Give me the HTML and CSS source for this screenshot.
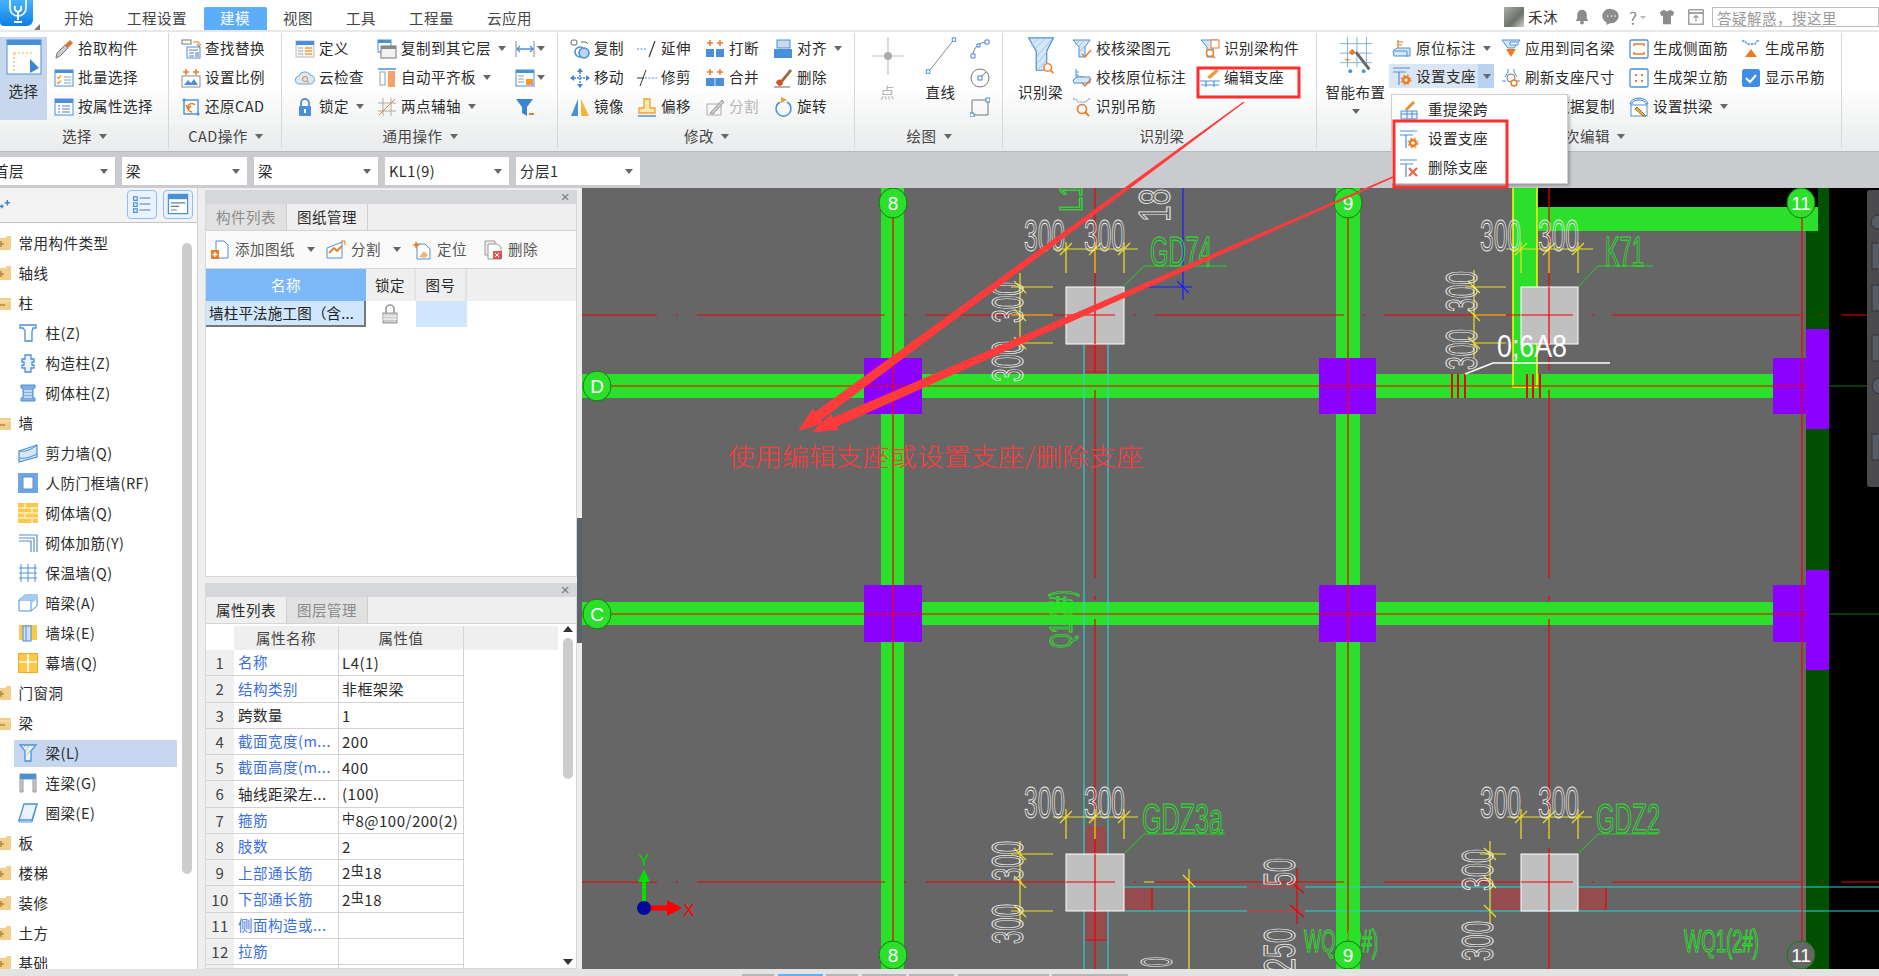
FILE: index.html
```html
<!DOCTYPE html>
<html lang="zh-CN">
<head>
<meta charset="utf-8">
<title>建模</title>
<link rel="stylesheet" href="styles.css">
</head>
<body>
<svg class="sprite" aria-hidden="true">
<symbol id="pick" viewBox="0 0 20 20"><path d="M2 19l1-5 8-8 3 3-8 8z" fill="#ccc" stroke="#777"/><path d="M11 6l5-5 3 3-5 5z" fill="#d9772c"/></symbol>
<symbol id="batch" viewBox="0 0 20 20"><rect x="1" y="2" width="18" height="16" fill="#fff" stroke="#4a90d9"/><rect x="1" y="2" width="18" height="3" fill="#4a90d9"/><path d="M3 9l1.500 1.500L7 7.500M3 14l1.500 1.500L7 12.500" fill="none" stroke="#f09a30" stroke-width="1.300"/><path d="M10 9h7M10 12h7M10 15h7" stroke="#7aa"/></symbol>
<symbol id="attr" viewBox="0 0 20 20"><rect x="1" y="2" width="18" height="16" fill="#fff" stroke="#4a90d9"/><rect x="1" y="2" width="18" height="4" fill="#4a90d9"/><path d="M4 9h2M4 12h2M4 15h2M8 9h8M8 12h8M8 15h8" stroke="#5b7f9f"/></symbol>
<symbol id="find" viewBox="0 0 20 20"><rect x="1" y="1" width="9" height="4" fill="#fff" stroke="#777"/><path d="M12 3h6v4M16 5l2 3 2-3" fill="none" stroke="#e87d2c"/><rect x="6" y="8" width="13" height="11" fill="#fff" stroke="#4a90d9"/><path d="M8 11h9M8 14h5M8 17h5M15 13v5M17 13v5" stroke="#4a78a8"/></symbol>
<symbol id="scale" viewBox="0 0 20 20"><path d="M5 1v6M2 4h6M15 1v6M12 4h6" stroke="#e87d2c" stroke-width="1.500"/><rect x="1" y="8" width="18" height="11" fill="#fff" stroke="#889"/><path d="M3 17l4-5 3 3 3-4 4 6z" fill="#4a90d9"/></symbol>
<symbol id="restore" viewBox="0 0 20 20"><rect x="3" y="3" width="14" height="14" fill="none" stroke="#4a90d9" stroke-width="1.400"/><path d="M1 3h4M3 1v4M15 17h4M17 15v4" stroke="#4a90d9"/><path d="M14 8c-3-3-7-1-7 3 0 2 2 4 4 4M5 8l2 4 3-3" fill="none" stroke="#e87d2c" stroke-width="1.600"/></symbol>
<symbol id="define" viewBox="0 0 20 20"><rect x="1" y="2" width="18" height="16" fill="#f4f4f0" stroke="#bbb"/><rect x="1" y="2" width="18" height="4" fill="#4a90d9"/><path d="M3 9h5M3 12h5M3 15h5" stroke="#aaa"/><path d="M10 9h7M10 12h7M10 15h7" stroke="#f0a040" stroke-width="1.400"/></symbol>
<symbol id="cloud" viewBox="0 0 20 20"><path d="M5 16a4 4 0 0 1-1-8 6 6 0 0 1 11-1 4.500 4.500 0 0 1 0 9z" fill="#dbe9f7" stroke="#6aa3dc"/><circle cx="10" cy="11" r="2.500" fill="none" stroke="#e87d2c"/><path d="M12 13l2 2" stroke="#e87d2c"/></symbol>
<symbol id="lock" viewBox="0 0 20 20"><path d="M6 9V6a4 4 0 0 1 8 0v3" fill="none" stroke="#4a90d9" stroke-width="1.800"/><rect x="4" y="9" width="12" height="10" rx="1" fill="#4a90d9"/><rect x="9" y="12" width="2" height="4" fill="#fff"/></symbol>
<symbol id="copylayer" viewBox="0 0 20 20"><rect x="1" y="1" width="13" height="12" fill="#fff" stroke="#4a90d9"/><rect x="1" y="1" width="13" height="3" fill="#4a90d9"/><rect x="4" y="7" width="15" height="12" fill="#f2f2f2" stroke="#777"/><rect x="4" y="7" width="15" height="3" fill="#888"/></symbol>
<symbol id="alignplate" viewBox="0 0 20 20"><path d="M1 1h18" stroke="#4a90d9" stroke-width="1.500"/><rect x="3" y="4" width="5" height="13" fill="#fff" stroke="#999"/><rect x="11" y="3" width="7" height="16" fill="#f7a26a"/></symbol>
<symbol id="twopoint" viewBox="0 0 20 20"><path d="M6 1v18M14 1v18M1 6h18M1 14h18" stroke="#aaa"/><path d="M2 18L18 2" stroke="#e87d2c"/></symbol>
<symbol id="dimh" viewBox="0 0 20 20"><path d="M1 2v16M19 2v16" stroke="#888"/><path d="M3 10h14M5 7l-3 3 3 3M15 7l3 3-3 3" fill="none" stroke="#4a90d9" stroke-width="1.300"/></symbol>
<symbol id="win2" viewBox="0 0 20 20"><rect x="1" y="2" width="18" height="16" fill="#fff" stroke="#4a90d9"/><rect x="1" y="2" width="18" height="3" fill="#4a90d9"/><path d="M3 8h6M3 11h6M3 14h6" stroke="#999"/><rect x="11" y="11" width="7" height="6" fill="#f09a30"/></symbol>
<symbol id="filter" viewBox="0 0 20 20"><path d="M1 2h17l-6 8v9l-5-3v-6z" fill="#3d84d2"/><path d="M14 17h5" stroke="#e87d2c" stroke-width="2"/></symbol>
<symbol id="copy" viewBox="0 0 20 20"><rect x="1" y="1" width="6" height="5" rx="2" fill="none" stroke="#666"/><path d="M11 3h5l2 2" fill="none" stroke="#666"/><circle cx="10" cy="13" r="5" fill="none" stroke="#4a90d9" stroke-width="1.600"/><circle cx="14" cy="14" r="5" fill="#bad6f2" stroke="#4a90d9" stroke-width="1.600"/></symbol>
<symbol id="move" viewBox="0 0 20 20"><path d="M10 0l3 4H7zM10 20l-3-4h6zM0 10l4-3v6zM20 10l-4 3V7z" fill="#3d84d2"/><path d="M10 4v12M4 10h12" stroke="#3d84d2" stroke-width="1.500" stroke-dasharray="2 1"/></symbol>
<symbol id="mirror" viewBox="0 0 20 20"><path d="M8 2v17H1z" fill="#4a90d9"/><path d="M11 2v17h8z" fill="#f7b538"/></symbol>
<symbol id="extend" viewBox="0 0 20 20"><path d="M0 10h10" stroke="#4a90d9" stroke-dasharray="2 1.500"/><path d="M12 18L18 2" stroke="#333" stroke-width="1.200"/></symbol>
<symbol id="trim" viewBox="0 0 20 20"><path d="M0 10h7" stroke="#333"/><path d="M8 10h12" stroke="#4a90d9" stroke-dasharray="2 1.500"/><path d="M3 18L9 2" stroke="#333"/></symbol>
<symbol id="offset" viewBox="0 0 20 20"><path d="M2 16v-5h5V2h6v9h5v5z" fill="#ffe7b0" stroke="#f0a030" stroke-width="1.300"/><path d="M1 19h18" stroke="#4a90d9" stroke-width="1.500"/></symbol>
<symbol id="break" viewBox="0 0 20 20"><path d="M5 1v6M2 4h6M15 1v6M12 4h6" stroke="#e87d2c" stroke-width="1.500"/><rect x="1" y="10" width="8" height="8" fill="#4a90d9"/><rect x="11" y="10" width="8" height="8" fill="#4a90d9"/></symbol>
<symbol id="merge" viewBox="0 0 20 20"><path d="M5 1v6M2 4h6M15 1v6M12 4h6" stroke="#e87d2c" stroke-width="1.500"/><rect x="1" y="10" width="18" height="8" fill="#4a90d9"/><path d="M10 10v8" stroke="#cfe3f7"/></symbol>
<symbol id="split" viewBox="0 0 20 20"><path d="M2 7h14v11H2z" fill="none" stroke="#aaa"/><path d="M5 16L17 3l2 2L8 17z" fill="#ccc" stroke="#999"/></symbol>
<symbol id="splitc" viewBox="0 0 20 20"><path d="M1 8l15-6v16H1z" fill="#fff" stroke="#4a90d9"/><path d="M3 13l5-5 3 3 5-5" fill="none" stroke="#ec7b22" stroke-width="1.800"/><path d="M15 1h4v4" fill="none" stroke="#ec7b22"/></symbol>
<symbol id="align" viewBox="0 0 20 20"><rect x="4" y="1" width="13" height="8" fill="#c6dbf2" stroke="#4a90d9"/><rect x="1" y="10" width="18" height="9" fill="#4a90d9"/></symbol>
<symbol id="brush" viewBox="0 0 20 20"><path d="M8 12L17 1l2 2-9 11z" fill="#9c6a3a"/><path d="M3 15a4 4 0 0 1 6-3l1 2a4 4 0 0 1-4 4z" fill="#d0561f"/><path d="M1 19h16" stroke="#666"/></symbol>
<symbol id="rotate" viewBox="0 0 20 20"><path d="M7 5a7.500 7.500 0 1 0 7 0" fill="none" stroke="#4a90d9" stroke-width="1.500"/><path d="M8 0l6 3-6 3z" fill="#f09a30"/></symbol>
<symbol id="point" viewBox="0 0 36 44"><path d="M18 0v44M0 22h36" stroke="#bbb" stroke-width="1.200"/><circle cx="18" cy="22" r="4.500" fill="#aaa"/></symbol>
<symbol id="line" viewBox="0 0 36 44"><path d="M3 41L33 3" stroke="#777" stroke-width="1"/><rect x="1" y="38" width="4" height="4" fill="#fff" stroke="#3d84d2"/><rect x="31" y="1" width="4" height="4" fill="#fff" stroke="#3d84d2"/></symbol>
<symbol id="arc" viewBox="0 0 20 20"><path d="M3 17C3 9 9 3 17 3" fill="none" stroke="#777"/><path d="M1 15h4v4H1zM7 5h3v3H7zM15 1h4v4h-4z" fill="#fff" stroke="#3d84d2"/></symbol>
<symbol id="circle" viewBox="0 0 20 20"><circle cx="10" cy="10" r="9" fill="none" stroke="#777"/><path d="M10 10l6-6" stroke="#777"/><rect x="8" y="8" width="4" height="4" fill="#fff" stroke="#3d84d2"/></symbol>
<symbol id="rect" viewBox="0 0 20 20"><path d="M2 3h16v15H2z" fill="none" stroke="#777"/><path d="M0 16h4v4H0zM16 1h4v4h-4z" fill="#fff" stroke="#3d84d2"/></symbol>
<symbol id="beam" viewBox="0 0 28 40"><path d="M1 1h26l-7 14v20H9V15z" fill="#d6e6f7" stroke="#4a90d9" stroke-width="1.300"/><path d="M3 10l8-8M7 13l11-11M10 20L25 3M10 28L20 16M11 34l9-10" stroke="#9cc2ea"/><circle cx="21" cy="32" r="4" fill="#fff" stroke="#ec7b22" stroke-width="1.500"/><path d="M24 35l3 3" stroke="#ec7b22" stroke-width="1.800"/></symbol>
<symbol id="check1" viewBox="0 0 20 20"><path d="M1 1h17l-5 7v10H7V8z" fill="#d6e6f7" stroke="#4a90d9"/><path d="M3 6l4-4M7 7l5-5M8 12l5-5" stroke="#9cc2ea"/><path d="M10 15l3 3 6-7" fill="none" stroke="#e8792c" stroke-width="1.500"/></symbol>
<symbol id="check2" viewBox="0 0 20 20"><path d="M4 1v8h8M4 4h3M4 7h3" fill="none" stroke="#4a90d9"/><path d="M1 12l4-3h13v6H2z" fill="#d6e6f7" stroke="#4a90d9"/><path d="M10 15l3 3 6-7" fill="none" stroke="#e8792c" stroke-width="1.500"/></symbol>
<symbol id="hang" viewBox="0 0 20 20"><path d="M1 2h3l2 3h8l2-3h3" fill="none" stroke="#4a90d9" stroke-dasharray="2 1"/><circle cx="10" cy="12" r="4.500" fill="none" stroke="#ec7b22" stroke-width="1.600"/><path d="M13 15l4 4" stroke="#ec7b22" stroke-width="2"/></symbol>
<symbol id="beamcomp" viewBox="0 0 20 20"><path d="M1 1h17l-5 7v10H7V8z" fill="#d6e6f7" stroke="#4a90d9"/><rect x="11" y="1" width="8" height="8" fill="#fff" stroke="#ec7b22"/><circle cx="10" cy="14" r="3.500" fill="#fff" stroke="#ec7b22" stroke-width="1.500"/><path d="M13 17l2 2" stroke="#ec7b22" stroke-width="1.500"/></symbol>
<symbol id="editsup" viewBox="0 0 20 20"><path d="M7 9l9-8 3 2-9 8z" fill="#ef9a45"/><path d="M0 13h20M1 17h18M6 13v6M14 13v6" stroke="#4a90d9" stroke-width="1.200"/></symbol>
<symbol id="smart" viewBox="0 0 36 40"><path d="M9 0v32M19 0v32M29 0v32M1 7h34M1 17h34M1 27h34" stroke="#79aee5"/><path d="M18 16l14 18" stroke="#666" stroke-width="3"/><path d="M14 13l3 3-3 3-3-3zM9 21v5M6 24h6" fill="#ec7b22" stroke="#ec7b22"/><circle cx="26" cy="36" r="2" fill="#4a90d9"/><circle cx="12" cy="36" r="2" fill="#4a90d9"/></symbol>
<symbol id="origin" viewBox="0 0 20 20"><path d="M6 1v9M6 3h5M6 6h4" stroke="#ec7b22" stroke-width="1.200"/><path d="M1 12l4-3h13v8H2z" fill="#d6e6f7" stroke="#4a90d9"/><path d="M2 12h13v6" fill="none" stroke="#4a90d9"/></symbol>
<symbol id="setsup" viewBox="0 0 20 20"><path d="M1 2h17M1 6h13M7 6v13" stroke="#4a90d9" stroke-width="1.200"/><circle cx="14" cy="14" r="3" fill="none" stroke="#ec7b22" stroke-width="2.400"/><circle cx="14" cy="14" r="5" fill="none" stroke="#ec7b22" stroke-width="1" stroke-dasharray="2 2"/></symbol>
<symbol id="delsup" viewBox="0 0 20 20"><path d="M1 2h17M1 6h13M7 6v13" stroke="#4a90d9" stroke-width="1.200"/><path d="M10 10l8 8M18 10l-8 8" stroke="#e8674a" stroke-width="2.200"/></symbol>
<symbol id="apply" viewBox="0 0 20 20"><path d="M1 1h18l-6 8H7z" fill="#d6e6f7" stroke="#4a90d9"/><path d="M9 3h8v3H9z" fill="#fff" stroke="#4a90d9"/><path d="M5 10h10l-5 8z" fill="#ec7b22"/></symbol>
<symbol id="refresh" viewBox="0 0 20 20"><path d="M1 13h4M15 13h4M7 1v3M13 1v3M7 4l-3 5M13 4l3 5" stroke="#4a90d9" fill="none"/><circle cx="10" cy="10" r="4" fill="none" stroke="#777"/><circle cx="13" cy="15" r="3" fill="#fff" stroke="#ec7b22" stroke-width="1.400"/></symbol>
<symbol id="side" viewBox="0 0 20 20"><rect x="1" y="1" width="18" height="18" rx="1.500" fill="#fff" stroke="#4a90d9" stroke-width="1.300"/><path d="M5 7V5h10v2M5 13v2h10v-2" fill="none" stroke="#ec7b22" stroke-width="1.500"/></symbol>
<symbol id="erect" viewBox="0 0 20 20"><rect x="1" y="1" width="18" height="18" rx="1.500" fill="#fff" stroke="#4a90d9" stroke-width="1.300"/><path d="M6 6h2v2H6zM12 6h2v2h-2zM6 12h2v2H6zM12 12h2v2h-2z" fill="#ec7b22"/></symbol>
<symbol id="arch" viewBox="0 0 20 20"><path d="M1 7a9 6 0 0 1 18 0l-2 0a7 4 0 0 0-14 0z" fill="#cfe2f6" stroke="#4a90d9"/><rect x="2" y="8" width="16" height="11" fill="#fff" stroke="#4a90d9"/><path d="M8 10l9 9-3 0-8-7z" fill="#e9b04a" stroke="#98712c"/></symbol>
<symbol id="hanger" viewBox="0 0 20 20"><path d="M1 2h3l2 3h8l2-3h3" fill="none" stroke="#4a90d9" stroke-width="1.300" stroke-dasharray="2.500 1"/><path d="M4 18l6-8 6 8z" fill="#ec7b22"/></symbol>
<symbol id="chk" viewBox="0 0 20 20"><rect x="1" y="1" width="18" height="18" rx="2.500" fill="#3d8fe6"/><path d="M5 10l4 4 6-7" fill="none" stroke="#fff" stroke-width="2"/></symbol>
<symbol id="reload" viewBox="0 0 20 20"><path d="M6 9L14 1l2 2-8 8z" fill="#ef8a2e"/><path d="M2 11h16v8H2zM2 14h16M8 11v8M13 11v8" fill="#eaf2fb" stroke="#4a90d9"/></symbol>
<symbol id="tcol" viewBox="0 0 20 20"><path d="M2 2h16v3h-3l-1 3v10H7V8L5 5H2z" fill="#fff" stroke="#4a90d9" stroke-width="1.300"/></symbol>
<symbol id="gcol" viewBox="0 0 20 20"><path d="M7 2h6v4h3v3h-2v3h2v3h-3v4H7v-4H4v-3h2V9H4V6h3z" fill="#eaf2fb" stroke="#4a90d9" stroke-width="1.300"/></symbol>
<symbol id="mcol" viewBox="0 0 20 20"><path d="M3 2h14v3h-2v10h2v3H3v-3h2V5H3z" fill="#7fb0e5" stroke="#4a90d9"/><path d="M6 8h8M6 11h8M6 14h8" stroke="#fff"/></symbol>
<symbol id="shear" viewBox="0 0 20 20"><path d="M1 8l18-6v12L1 19z" fill="#d6e6f7" stroke="#4a90d9" stroke-width="1.200"/><path d="M1 8c6 1 12-1 18-6M1 15c6 1 12-1 18-4" fill="none" stroke="#4a90d9"/></symbol>
<symbol id="door" viewBox="0 0 20 20"><rect x="0" y="0" width="20" height="20" fill="#6ea5e4"/><rect x="5" y="4" width="10" height="12" fill="#fff" stroke="#5a8fd8"/></symbol>
<symbol id="brick" viewBox="0 0 20 20"><rect width="20" height="20" fill="#fdc94b"/><path d="M0 5h20M0 10h20M0 15h20M7 0v5M14 5v5M7 10v5M14 15v5" stroke="#fff"/></symbol>
<symbol id="rein" viewBox="0 0 20 20"><path d="M1 2h18v17M1 5h15v14M1 8h12v11" fill="none" stroke="#5b8ec4" stroke-width="1.200"/></symbol>
<symbol id="insul" viewBox="0 0 20 20"><path d="M3 1v18M10 1v18M17 1v18M1 5h18M1 10h18M1 15h18" stroke="#4a90d9"/></symbol>
<symbol id="dbeam" viewBox="0 0 20 20"><path d="M1 7l6-5h12v11l-6 5H1z" fill="#fff" stroke="#4a90d9"/><path d="M1 7h12v11M13 7l6-5" fill="none" stroke="#4a90d9"/><path d="M7 2h12v4L13 11V7H1z" fill="#a8ccee"/></symbol>
<symbol id="pier" viewBox="0 0 20 20"><rect x="1" y="2" width="18" height="15" fill="#fdc94b"/><rect x="5" y="3" width="8" height="15" fill="#cfe2f6" stroke="#4a90d9"/><path d="M8 3v15" stroke="#4a90d9"/></symbol>
<symbol id="curtain" viewBox="0 0 20 20"><rect width="20" height="20" fill="#fdc94b"/><path d="M10 0v20M0 9h20" stroke="#fff" stroke-width="1.500"/><rect x=".5" y=".5" width="19" height="19" fill="none" stroke="#f5a623"/></symbol>
<symbol id="lbeam" viewBox="0 0 20 20"><path d="M2 1h16v18h-3V6H5v13H2z" fill="#c8c8c8" stroke="#999"/><rect x="2" y="1" width="16" height="5" fill="#4a8fdc"/></symbol>
<symbol id="rbeam" viewBox="0 0 20 20"><path d="M6 1h13l-5 16H1z" fill="#eaf2fb" stroke="#4a90d9" stroke-width="1.300"/><path d="M1 17v2h13l5-18" fill="none" stroke="#4a90d9"/></symbol>
<symbol id="beaml" viewBox="0 0 20 20"><path d="M2 2h16l-5 6v10H7V8z" fill="#eaf2fb" stroke="#4a90d9" stroke-width="1.300"/><path d="M4 6l3-3M7 8l4-5M9 12l3-4" stroke="#9cc2ea"/></symbol>
<symbol id="fplus" viewBox="0 0 16 16"><path d="M0 3h8l2-2h4v14H0z" fill="#f3cf8e"/><path d="M1 9h6M4 6v6" stroke="#b98a3a" stroke-width="1.500"/></symbol>
<symbol id="fminus" viewBox="0 0 16 16"><path d="M0 3h14v12H0z" fill="#f3cf8e"/><path d="M0 6h14" stroke="#fbe7bf"/><path d="M1 10h7" stroke="#b98a3a" stroke-width="1.500"/></symbol>
<symbol id="addp" viewBox="0 0 20 20"><path d="M6 1h8l4 4v13H6z" fill="#fff" stroke="#4a90d9"/><rect x="1" y="10" width="8" height="9" fill="#ec7b22"/><path d="M5 12v5M2.500 14.500h5" stroke="#fff" stroke-width="1.300"/></symbol>
<symbol id="locate" viewBox="0 0 20 20"><path d="M5 4h8l5 5v10H5z" fill="#fff" stroke="#4a90d9"/><path d="M4 1l1.500 3L9 5 5.500 6 4 9 3 6 0 5l3-1z" fill="#ec7b22"/><path d="M7 17l5-6 4 4-3 3z" fill="#f7b47a"/></symbol>
<symbol id="delp" viewBox="0 0 20 20"><path d="M2 1h10v14H2z" fill="#eee" stroke="#999"/><path d="M5 4h9l4 3v12H5z" fill="#fff" stroke="#999"/><rect x="10" y="11" width="9" height="8" fill="#e0555a"/><path d="M12 13l4 4M16 13l-4 4" stroke="#fff"/></symbol>
<symbol id="grey-lock" viewBox="0 0 20 20"><path d="M6 9V5a4 4 0 0 1 8 0v4" fill="none" stroke="#999" stroke-width="1.600"/><rect x="3" y="9" width="14" height="10" fill="#ccc" stroke="#999"/><path d="M3 12h14M3 15h14" stroke="#fff"/></symbol>
<symbol id="bell" viewBox="0 0 20 20"><path d="M10 1a6 6 0 0 0-6 6v5l-2 3h16l-2-3V7a6 6 0 0 0-6-6z" fill="#8c8c8c"/><circle cx="10" cy="17" r="2.500" fill="#8c8c8c"/></symbol>
<symbol id="chat" viewBox="0 0 20 20"><path d="M10 1a9 8 0 0 0-5 15l0 3 4-2a9 8 0 1 0 1-16z" fill="#8c8c8c"/><path d="M6 9h1M10 9h1M14 9h1" stroke="#fff" stroke-width="2"/></symbol>
<symbol id="shirt" viewBox="0 0 20 20"><path d="M6 1l4 2 4-2 5 3-2 5-2-1v11H5V8L3 9 1 4z" fill="#8c8c8c"/></symbol>
<symbol id="box" viewBox="0 0 20 20"><rect x="1" y="1" width="18" height="18" fill="#fff" stroke="#8c8c8c" stroke-width="1.500"/><path d="M1 5h18" stroke="#8c8c8c" stroke-width="2"/><path d="M10 16V9M7 11l3-3 3 3" fill="none" stroke="#8c8c8c" stroke-width="1.300"/></symbol>
</svg>

<header class="topbar">
  <div class="logo"><svg class="logo-mark" viewBox="0 0 33 26"><path d="M10 0v8c0 5 4 8 8 8s8-3 8-8V0" fill="none" stroke="#d9f0ff" stroke-width="2"/><path d="M15 6c-1 3 0 5 3 6 3-1 4-3 3-6M18 12v8M14 22h8" fill="none" stroke="#fff" stroke-width="2"/></svg><i class="logo-corner"></i></div>
  <nav class="tabs">
    <span class="tab">开始</span><span class="tab">工程设置</span><span class="tab active">建模</span><span class="tab">视图</span><span class="tab">工具</span><span class="tab">工程量</span><span class="tab">云应用</span>
  </nav>
  <div class="account">
    <i class="avatar"></i><span class="uname">禾沐</span>
    <svg class="hi"><use href="#bell"/></svg>
    <svg class="hi chat"><use href="#chat"/></svg>
    <span class="help">?</span><i class="arr small"></i>
    <svg class="hi shirt"><use href="#shirt"/></svg>
    <svg class="hi"><use href="#box"/></svg>
    <span class="search">答疑解惑，搜这里</span>
  </div>
</header>

<section class="ribbon">
  <div class="group g1">
    <div class="gbody">
      <div class="big select"><svg class="sel-ic" viewBox="0 0 36 36"><rect x="1" y="1" width="34" height="34" fill="#fff" stroke="#4a90d9"/><rect x="1" y="1" width="34" height="5" fill="#4a90d9"/><path d="M8 14h18M8 14v18" stroke="#f5a623" stroke-dasharray="2 2"/><path d="M24 20l9 9-9 5z" fill="#3d84d2"/></svg><span>选择</span></div>
      <div class="col c-g1">
        <div class="it"><svg class="ic"><use href="#pick"/></svg>拾取构件</div>
        <div class="it"><svg class="ic"><use href="#batch"/></svg>批量选择</div>
        <div class="it"><svg class="ic"><use href="#attr"/></svg>按属性选择</div>
      </div>
    </div>
    <div class="glabel">选择<i class="arr"></i></div>
  </div>
  <div class="group g2">
    <div class="gbody">
      <div class="col">
        <div class="it"><svg class="ic"><use href="#find"/></svg>查找替换</div>
        <div class="it"><svg class="ic"><use href="#scale"/></svg>设置比例</div>
        <div class="it"><svg class="ic"><use href="#restore"/></svg>还原CAD</div>
      </div>
    </div>
    <div class="glabel">CAD操作<i class="arr"></i></div>
  </div>
  <div class="group g3">
    <div class="gbody">
      <div class="col w82">
        <div class="it"><svg class="ic"><use href="#define"/></svg>定义</div>
        <div class="it"><svg class="ic"><use href="#cloud"/></svg>云检查</div>
        <div class="it"><svg class="ic"><use href="#lock"/></svg>锁定<i class="arr"></i></div>
      </div>
      <div class="col w138">
        <div class="it"><svg class="ic"><use href="#copylayer"/></svg>复制到其它层<i class="arr"></i></div>
        <div class="it"><svg class="ic"><use href="#alignplate"/></svg>自动平齐板<i class="arr"></i></div>
        <div class="it"><svg class="ic"><use href="#twopoint"/></svg>两点辅轴<i class="arr"></i></div>
      </div>
      <div class="col">
        <div class="it"><svg class="ic"><use href="#dimh"/></svg><i class="arr tight"></i></div>
        <div class="it"><svg class="ic"><use href="#win2"/></svg><i class="arr tight"></i></div>
        <div class="it"><svg class="ic"><use href="#filter"/></svg></div>
      </div>
    </div>
    <div class="glabel">通用操作<i class="arr"></i></div>
  </div>
  <div class="group g4">
    <div class="gbody">
      <div class="col w67">
        <div class="it"><svg class="ic"><use href="#copy"/></svg>复制</div>
        <div class="it"><svg class="ic"><use href="#move"/></svg>移动</div>
        <div class="it"><svg class="ic"><use href="#mirror"/></svg>镜像</div>
      </div>
      <div class="col w68">
        <div class="it"><svg class="ic"><use href="#extend"/></svg>延伸</div>
        <div class="it"><svg class="ic"><use href="#trim"/></svg>修剪</div>
        <div class="it"><svg class="ic"><use href="#offset"/></svg>偏移</div>
      </div>
      <div class="col w68">
        <div class="it"><svg class="ic"><use href="#break"/></svg>打断</div>
        <div class="it"><svg class="ic"><use href="#merge"/></svg>合并</div>
        <div class="it off"><svg class="ic"><use href="#split"/></svg>分割</div>
      </div>
      <div class="col">
        <div class="it"><svg class="ic"><use href="#align"/></svg>对齐<i class="arr"></i></div>
        <div class="it"><svg class="ic"><use href="#brush"/></svg>删除</div>
        <div class="it"><svg class="ic"><use href="#rotate"/></svg>旋转</div>
      </div>
    </div>
    <div class="glabel">修改<i class="arr"></i></div>
  </div>
  <div class="group g5">
    <div class="gbody">
      <div class="big w49 off"><svg class="big-ic"><use href="#point"/></svg><span>点</span></div>
      <div class="big w49 gap-l"><svg class="big-ic"><use href="#line"/></svg><span>直线</span></div>
      <div class="col draw">
        <div class="it"><svg class="ic"><use href="#arc"/></svg></div>
        <div class="it"><svg class="ic"><use href="#circle"/></svg></div>
        <div class="it"><svg class="ic"><use href="#rect"/></svg></div>
      </div>
    </div>
    <div class="glabel">绘图<i class="arr"></i></div>
  </div>
  <div class="group g6">
    <div class="gbody">
      <div class="big w59"><svg class="big-ic"><use href="#beam"/></svg><span>识别梁</span></div>
      <div class="col w128">
        <div class="it"><svg class="ic"><use href="#check1"/></svg>校核梁图元</div>
        <div class="it"><svg class="ic"><use href="#check2"/></svg>校核原位标注</div>
        <div class="it"><svg class="ic"><use href="#hang"/></svg>识别吊筋</div>
      </div>
      <div class="col">
        <div class="it"><svg class="ic"><use href="#beamcomp"/></svg>识别梁构件</div>
        <div class="it"><svg class="ic"><use href="#editsup"/></svg>编辑支座</div>
      </div>
    </div>
    <div class="glabel g6-label">识别梁</div>
  </div>
  <div class="group g7">
    <div class="gbody">
      <div class="big w73"><svg class="big-ic"><use href="#smart"/></svg><span>智能布置</span><i class="arr big-arr"></i></div>
      <div class="col w109">
        <div class="it"><svg class="ic"><use href="#origin"/></svg>原位标注<i class="arr"></i></div>
        <div class="it on"><svg class="ic"><use href="#setsup"/></svg>设置支座<i class="arr"></i></div>
      </div>
      <div class="col w128">
        <div class="it"><svg class="ic"><use href="#apply"/></svg>应用到同名梁</div>
        <div class="it"><svg class="ic"><use href="#refresh"/></svg>刷新支座尺寸</div>
        <div class="it"><svg class="ic"></svg>梁跨数据复制</div>
      </div>
      <div class="col w112">
        <div class="it"><svg class="ic"><use href="#side"/></svg>生成侧面筋</div>
        <div class="it"><svg class="ic"><use href="#erect"/></svg>生成架立筋</div>
        <div class="it"><svg class="ic"><use href="#arch"/></svg>设置拱梁<i class="arr"></i></div>
      </div>
      <div class="col">
        <div class="it"><svg class="ic"><use href="#hanger"/></svg>生成吊筋</div>
        <div class="it"><svg class="ic"><use href="#chk"/></svg>显示吊筋</div>
      </div>
    </div>
    <div class="glabel g7-label">二次编辑<i class="arr"></i></div>
  </div>
  <div class="ribbon-end"></div>
</section>

<section class="combos">
  <div class="combo first"><span>首层</span><i class="arr"></i></div>
  <div class="combo w125"><span>梁</span><i class="arr"></i></div>
  <div class="combo w124"><span>梁</span><i class="arr"></i></div>
  <div class="combo w124"><span>KL1(9)</span><i class="arr"></i></div>
  <div class="combo w124"><span>分层1</span><i class="arr"></i></div>
</section>

<main class="workspace">
  <aside class="tree-panel">
    <div class="tree-head">
      <svg class="sparkle" viewBox="0 0 12 12"><path d="M8 1v6M5 4h6M2 6v4M0 8h4" stroke="#3d84d2" stroke-width="1.600"/></svg>
      <span class="tbtn"><svg viewBox="0 0 20 20"><path d="M3 4h3v3H3zM3 9h3v3H3zM3 14h3v3H3z" fill="none" stroke="#4a90d9"/><path d="M8 5h9M8 10h9M8 15h9" stroke="#5d7f9f"/></svg></span>
      <span class="tbtn"><svg viewBox="0 0 20 20"><rect x="2" y="2" width="16" height="16" fill="#fff" stroke="#4a90d9"/><rect x="2" y="2" width="16" height="4" fill="#4a90d9"/><path d="M4 9h12M4 12h7M4 15h5" stroke="#5d7f9f"/></svg></span>
    </div>
    <div class="tree">
      <div class="n g"><svg class="fi"><use href="#fplus"/></svg>常用构件类型</div>
      <div class="n g"><svg class="fi"><use href="#fplus"/></svg>轴线</div>
      <div class="n g"><svg class="fi"><use href="#fminus"/></svg>柱</div>
      <div class="n l"><svg class="li"><use href="#tcol"/></svg>柱(Z)</div>
      <div class="n l"><svg class="li"><use href="#gcol"/></svg>构造柱(Z)</div>
      <div class="n l"><svg class="li"><use href="#mcol"/></svg>砌体柱(Z)</div>
      <div class="n g"><svg class="fi"><use href="#fminus"/></svg>墙</div>
      <div class="n l"><svg class="li"><use href="#shear"/></svg>剪力墙(Q)</div>
      <div class="n l"><svg class="li"><use href="#door"/></svg>人防门框墙(RF)</div>
      <div class="n l"><svg class="li"><use href="#brick"/></svg>砌体墙(Q)</div>
      <div class="n l"><svg class="li"><use href="#rein"/></svg>砌体加筋(Y)</div>
      <div class="n l"><svg class="li"><use href="#insul"/></svg>保温墙(Q)</div>
      <div class="n l"><svg class="li"><use href="#dbeam"/></svg>暗梁(A)</div>
      <div class="n l"><svg class="li"><use href="#pier"/></svg>墙垛(E)</div>
      <div class="n l"><svg class="li"><use href="#curtain"/></svg>幕墙(Q)</div>
      <div class="n g"><svg class="fi"><use href="#fplus"/></svg>门窗洞</div>
      <div class="n g"><svg class="fi"><use href="#fminus"/></svg>梁</div>
      <div class="n l sel"><svg class="li"><use href="#beaml"/></svg>梁(L)</div>
      <div class="n l"><svg class="li"><use href="#lbeam"/></svg>连梁(G)</div>
      <div class="n l"><svg class="li"><use href="#rbeam"/></svg>圈梁(E)</div>
      <div class="n g"><svg class="fi"><use href="#fplus"/></svg>板</div>
      <div class="n g"><svg class="fi"><use href="#fplus"/></svg>楼梯</div>
      <div class="n g"><svg class="fi"><use href="#fplus"/></svg>装修</div>
      <div class="n g"><svg class="fi"><use href="#fplus"/></svg>土方</div>
      <div class="n g"><svg class="fi"><use href="#fplus"/></svg>基础</div>
    </div>
    <i class="tree-scroll"></i>
  </aside>

  <div class="mid">
    <section class="pane top-pane">
      <div class="pane-bar"><span class="close">×</span></div>
      <div class="pane-tabs"><span class="ptab off">构件列表</span><span class="ptab">图纸管理</span></div>
      <div class="pane-tools">
        <span class="pt t1"><svg class="ic"><use href="#addp"/></svg>添加图纸<i class="arr"></i></span>
        <span class="pt t2"><svg class="ic"><use href="#splitc"/></svg>分割<i class="arr"></i></span>
        <span class="pt t3"><svg class="ic"><use href="#locate"/></svg>定位</span>
        <span class="pt"><svg class="ic"><use href="#delp"/></svg>删除</span>
      </div>
      <div class="dwg-head"><span class="dh name">名称</span><span class="dh lockc">锁定</span><span class="dh num">图号</span></div>
      <div class="dwg-row"><span class="dr name">墙柱平法施工图（含...</span><span class="dr lockc"><svg class="ic"><use href="#grey-lock"/></svg></span><span class="dr num"></span></div>
    </section>
    <section class="pane prop-pane">
      <div class="pane-bar"><span class="close">×</span></div>
      <div class="pane-tabs"><span class="ptab">属性列表</span><span class="ptab off">图层管理</span></div>
      <div class="prop-head"><span class="ph idx"></span><span class="ph pname">属性名称</span><span class="ph pval">属性值</span></div>
      <div class="prop-rows">
        <div class="pr"><b>1</b><span class="k blue">名称</span><span class="v">L4(1)</span></div>
        <div class="pr"><b>2</b><span class="k blue">结构类别</span><span class="v">非框架梁</span></div>
        <div class="pr"><b>3</b><span class="k">跨数量</span><span class="v">1</span></div>
        <div class="pr"><b>4</b><span class="k blue">截面宽度(m...</span><span class="v">200</span></div>
        <div class="pr"><b>5</b><span class="k blue">截面高度(m...</span><span class="v">400</span></div>
        <div class="pr"><b>6</b><span class="k">轴线距梁左...</span><span class="v">(100)</span></div>
        <div class="pr"><b>7</b><span class="k blue">箍筋</span><span class="v"><span class="rb">中</span>8@100/200(2)</span></div>
        <div class="pr"><b>8</b><span class="k blue">肢数</span><span class="v">2</span></div>
        <div class="pr"><b>9</b><span class="k blue">上部通长筋</span><span class="v">2<span class="rb">虫</span>18</span></div>
        <div class="pr"><b>10</b><span class="k blue">下部通长筋</span><span class="v">2<span class="rb">虫</span>18</span></div>
        <div class="pr"><b>11</b><span class="k blue">侧面构造或...</span><span class="v"></span></div>
        <div class="pr"><b>12</b><span class="k blue">拉筋</span><span class="v"></span></div>
        <div class="pr"><b></b><span class="k"></span><span class="v"></span></div>
      </div>
      <i class="ps-up"></i><i class="ps-thumb"></i><i class="ps-down"></i>
    </section>
  </div>

  <i class="splitter"></i>

  <div class="canvas">
    <svg class="cad" viewBox="582 188 1297 781">
      <rect x="582" y="188" width="1297" height="781" fill="#666"/>
      <path d="M1538 188h291v19h-291z" fill="#000"/>
      <rect x="1829" y="188" width="50" height="781" fill="#000"/>
      <rect x="1806" y="231" width="23" height="738" fill="#005000"/>
      <rect x="1818" y="188" width="11" height="43" fill="#005000"/>

      <g fill="#2bdf2b">
        <rect x="582" y="374" width="1224" height="24"/>
        <rect x="582" y="602" width="1224" height="23"/>
        <rect x="881" y="188" width="23" height="781"/>
        <rect x="1336" y="188" width="24" height="781"/>
        <rect x="1513" y="188" width="24" height="199"/>
        <rect x="1538" y="207" width="280" height="24"/>
      </g>
      <path class="y2" d="M1513 188v199h24V188"/>
      <g fill="#8b00ff">
        <rect x="864" y="358" width="58" height="56"/><rect x="864" y="585" width="58" height="57"/>
        <rect x="1319" y="358" width="57" height="56"/><rect x="1319" y="585" width="57" height="57"/>
        <rect x="1773" y="358" width="56" height="56"/><rect x="1773" y="585" width="56" height="57"/>
        <rect x="1806" y="329" width="23" height="100"/><rect x="1806" y="570" width="23" height="100"/>
      </g>
      <path class="dg" d="M1829 386h50M1829 614h50"/>

      <g fill="#964c4c">
        <rect x="1085" y="344" width="22" height="28"/>
        <rect x="1085" y="826" width="22" height="28"/><rect x="1085" y="911" width="22" height="29"/>
        <rect x="1124" y="888" width="28" height="22"/>
        <rect x="1492" y="888" width="29" height="22"/><rect x="1578" y="888" width="28" height="22"/>
      </g>
      <path class="cy" d="M1084 345v624M1108 345v624M1124 887h755M1124 911h755"/>

      <path class="rd" d="M582 315h75M676 315h2M697 315h188M904 315h2M926 315h189M1134 315h2M1155 315h189M1363 315h2M1384 315h189M1592 315h2M1612 315h189M1821 315h2M1842 315h37"/>
      <path class="rd" d="M582 882h75M676 882h2M697 882h188M904 882h2M926 882h189M1134 882h2M1155 882h189M1363 882h2M1384 882h189M1592 882h2M1612 882h189M1821 882h2M1842 882h37"/>
      <path class="rd" d="M582 386h1224M582 614h1224M893 188v781M1348 188v781M1802 188v781"/>
      <path class="rd" d="M1095 188v184M1095 390v188M1095 596v4M1095 619v350M1549 188v182M1549 390v188M1549 596v5M1549 619v191M1549 828v4M1549 848v121"/>
      <path class="rd" d="M1085 372h22M1085 940h22M1152 888v22M1606 888v22M1247 887h58M1247 911h58M1297 868v56M1290 881l14 12M1290 905l14 12"/>
      <path class="rd2" d="M1452 374v24M1458 374v24M1465 374v24M1527 374v24M1533 374v24M1540 374v24"/>

      <g class="sq">
        <rect x="1066" y="287" width="58" height="57"/><rect x="1521" y="287" width="57" height="57"/>
        <rect x="1066" y="854" width="58" height="57"/><rect x="1521" y="854" width="57" height="57"/>
      </g>
      <path class="rd" d="M1095 287v57M1066 315h49M1549 287v57M1521 315h52M1095 854v57M1066 882h49M1549 854v57M1521 882h52"/>

      <path class="yl" d="M1053 249h85M1066 242v31M1095 242v31M1124 242v31M1060 255l12-12M1089 255l12-12M1118 255l12-12
        M1020 273v77M1011 287h42M1011 315h42M1011 343h42M1014 281l12 12M1014 309l12 12M1014 337l12 12"/>
      <path class="yl" d="M1506 249h87M1521 242v31M1549 242v31M1578 242v31M1515 255l12-12M1543 255l12-12M1572 255l12-12
        M1474 270v88M1465 287h41M1474 315h32M1474 343h32M1468 281l12 12M1468 309l12 12M1468 337l12 12"/>
      <path class="yl" d="M1053 817h85M1066 809v30M1095 809v30M1124 809v30M1060 823l12-12M1089 823l12-12M1118 823l12-12
        M1020 841v83M1011 854h42M1020 882h2M1011 911h42M1014 848l12 12M1014 876l12 12M1014 905l12 12"/>
      <path class="yl" d="M1507 817h85M1521 809v30M1549 809v30M1578 809v30M1515 823l12-12M1543 823l12-12M1572 823l12-12
        M1490 841v83M1480 854h26M1484 848l12 12M1484 876l12 12M1484 905l12 12"/>
      <path class="yl" d="M1189 869v100M1183 875l12 12M1144 882h10"/>
      <path class="bl" d="M1183 188v112M1146 287h46M1177 281l12 12"/>

      <path class="gl" d="M1123 287l21-21h83M1578 287l20-21h55M1124 854l20-20h81M1578 854l20-20h60"/>
      <path class="wl" d="M1465 374l28-11h117"/>

      <g class="dim">
        <text x="1024" y="251" textLength="41" lengthAdjust="spacingAndGlyphs">300</text>
        <text x="1084" y="251" textLength="41" lengthAdjust="spacingAndGlyphs">300</text>
        <text x="1480" y="251" textLength="41" lengthAdjust="spacingAndGlyphs">300</text>
        <text x="1538" y="251" textLength="41" lengthAdjust="spacingAndGlyphs">300</text>
        <text x="1024" y="818" textLength="41" lengthAdjust="spacingAndGlyphs">300</text>
        <text x="1084" y="818" textLength="41" lengthAdjust="spacingAndGlyphs">300</text>
        <text x="1480" y="818" textLength="41" lengthAdjust="spacingAndGlyphs">300</text>
        <text x="1538" y="818" textLength="41" lengthAdjust="spacingAndGlyphs">300</text>
        <text transform="translate(1023 382) rotate(-90)" textLength="41" lengthAdjust="spacingAndGlyphs">300</text>
        <text transform="translate(1023 323) rotate(-90)" textLength="41" lengthAdjust="spacingAndGlyphs">300</text>
        <text transform="translate(1477 370) rotate(-90)" textLength="41" lengthAdjust="spacingAndGlyphs">300</text>
        <text transform="translate(1477 312) rotate(-90)" textLength="41" lengthAdjust="spacingAndGlyphs">300</text>
        <text transform="translate(1023 944) rotate(-90)" textLength="40" lengthAdjust="spacingAndGlyphs">300</text>
        <text transform="translate(1023 881) rotate(-90)" textLength="40" lengthAdjust="spacingAndGlyphs">300</text>
        <text transform="translate(1493 961) rotate(-90)" textLength="40" lengthAdjust="spacingAndGlyphs">300</text>
        <text transform="translate(1493 891) rotate(-90)" textLength="42" lengthAdjust="spacingAndGlyphs">300</text>
        <text transform="translate(1295 886) rotate(-90)" textLength="28" lengthAdjust="spacingAndGlyphs">50</text>
        <text transform="translate(1295 973) rotate(-90)" textLength="45" lengthAdjust="spacingAndGlyphs">250</text>
        <text transform="translate(1170 222) rotate(-90)" textLength="50" lengthAdjust="spacingAndGlyphs">180</text>
        <text transform="translate(1172 967) rotate(-90)" textLength="10" lengthAdjust="spacingAndGlyphs">0</text>
      </g>
      <text class="note" x="1497" y="357" textLength="70" lengthAdjust="spacingAndGlyphs">0;6A8</text>
      <g class="gtx">
        <text x="1150" y="266" textLength="62" lengthAdjust="spacingAndGlyphs">GD74</text>
        <text x="1605" y="266" textLength="39" lengthAdjust="spacingAndGlyphs">K71</text>
        <text x="1142" y="833" textLength="81" lengthAdjust="spacingAndGlyphs">GDZ3a</text>
        <text x="1596" y="833" textLength="64" lengthAdjust="spacingAndGlyphs">GDZ2</text>
      </g>
      <g class="gtx2">
        <text x="1304" y="952" textLength="74" lengthAdjust="spacingAndGlyphs">WQ1(2#)</text>
        <text x="1684" y="952" textLength="75" lengthAdjust="spacingAndGlyphs">WQ1(2#)</text>
        <text transform="translate(1072 648) rotate(-90)" textLength="58" lengthAdjust="spacingAndGlyphs">Q1(2#)</text>
        <text transform="translate(1082 212) rotate(-90)" textLength="30" lengthAdjust="spacingAndGlyphs">L1</text>
      </g>

      <g class="bub">
        <ellipse cx="893" cy="203" rx="14" ry="15"/>
        <ellipse cx="1348" cy="203" rx="14" ry="15"/>
        <ellipse cx="597" cy="386" rx="14" ry="15"/>
        <ellipse cx="597" cy="614" rx="14" ry="15"/>
        <ellipse cx="893" cy="955" rx="14" ry="14"/>
        <ellipse cx="1348" cy="955" rx="14" ry="14"/>
      </g>
      <ellipse class="bub2" cx="1801" cy="203" rx="14" ry="15"/>
      <ellipse class="bub3" cx="1801" cy="955" rx="14" ry="14"/>
      <g class="bt">
        <text x="893" y="210">8</text><text x="1348" y="210">9</text><text x="1801" y="210">11</text>
        <text x="597" y="393">D</text><text x="597" y="621">C</text>
        <text x="893" y="962">8</text><text x="1348" y="962">9</text><text x="1801" y="962">11</text>
      </g>

      <path class="ax-g" d="M644 908v-28"/><path d="M638 882l6-13 6 13z" fill="#00e000"/>
      <path class="ax-r" d="M650 908h22"/><path d="M667 900l15 8-15 8z" fill="#f00"/>
      <circle cx="644" cy="908" r="7" fill="#000a9a"/>
      <text class="ax-t yc" x="644" y="866">Y</text><text class="ax-t xc" x="689" y="916">X</text>

      <text class="anno" x="728" y="466" textLength="415" lengthAdjust="spacingAndGlyphs">使用编辑支座或设置支座/删除支座</text>

      <rect class="rail" x="1867" y="190" width="16" height="297" rx="3"/>
      <g class="rail-ic"><circle cx="1878" cy="222" r="7"/><rect x="1872" y="243" width="10" height="26"/><rect x="1872" y="285" width="10" height="26"/><rect x="1872" y="335" width="10" height="26"/><circle cx="1880" cy="386" r="8"/><rect x="1872" y="434" width="10" height="26"/></g>
    </svg>
  </div>
</main>

<footer class="statusbar">
  <i class="st w32"></i><i class="st w45 cur"></i><i class="st w32"></i><i class="st w44"></i><i class="st w45"></i><i class="st w91"></i><i class="st w76"></i>
</footer>

<div class="menu">
  <div class="mi"><svg class="ic"><use href="#reload"/></svg>重提梁跨</div>
  <div class="mi"><svg class="ic"><use href="#setsup"/></svg>设置支座</div>
  <div class="mi"><svg class="ic"><use href="#delsup"/></svg>删除支座</div>
</div>

<svg class="overlay" viewBox="0 0 1879 976">
  <rect class="mark" x="1198" y="68" width="101" height="29"/>
  <rect class="mark" x="1394" y="121" width="113" height="66"/>
  <polygon class="shot" points="798,431 823.300,423.200 821,420 1244.400,102.600 1243.600,101.400 815,412 812.700,408.800"/>
  <polygon class="shot" points="812,432 838.500,430.200 837,426.500 1393.300,177.700 1392.700,176.300 832.800,417.500 831.300,413.800"/>
</svg>
</body>
</html>
```
FILE: styles.css
```css
* { box-sizing: border-box; }
html, body { margin: 0; padding: 0; }
body {
  position: relative;
  width: 1879px;
  height: 976px;
  overflow: hidden;
  background: #e3e3e3;
  color: #2b2b2b;
  font: 14.5px/1 "Noto Sans CJK SC", "Liberation Sans", sans-serif;
  letter-spacing: .5px;
}
i { display: block; font-style: normal; }
.sprite { position: absolute; width: 0; height: 0; }

/* shared */
.arr { width: 0; height: 0; margin-left: 7px; border: 4px solid transparent; border-top: 5px solid #666; border-bottom: 0; flex: none; }
.arr.small { border-top-color: #bbb; margin-left: 2px; border-width: 3px 3px 0; }
.ic { width: 20px; height: 20px; flex: none; }

/* top bar */
.topbar { display: flex; height: 32px; background: #fff; border-bottom: 2px solid #e7e8e9; }
.logo { position: relative; width: 47.5px; flex: none; }
.logo-mark { display: block; width: 33px; height: 26px; background: linear-gradient(#46b2ff, #0f7fe6); border-radius: 0 0 6px 4px; }
.logo-corner { position: absolute; left: 34px; top: 24px; border: 3px solid transparent; border-right-color: #777; border-bottom-color: #777; }
.tabs { display: flex; }
.tab { padding: 11px 16.5px 0; height: 30px; color: #444; }
.tab.active { background: #5caefb; color: #fff; border-radius: 2px 2px 0 0; margin-top: 7px; height: 23px; padding-top: 4px; }
.account { margin-left: auto; display: flex; align-items: center; height: 30px; color: #333; padding-top: 4px; }
.avatar { width: 20px; height: 20px; background: linear-gradient(135deg, #a8aea3, #6c7268 60%, #cfd2c9); }
.uname { margin-left: 4px; width: 46px; }
.hi { width: 16px; height: 18px; margin-right: 12px; }
.hi.chat { width: 18px; margin-right: 9px; }
.hi.shirt { margin-left: 13px; margin-right: 13px; }
.help { color: #8c8c8c; font-size: 17px; width: 9px; }
.search { width: 167px; height: 20px; margin-left: -4px; padding: 3px 0 0 4px; border: 1px solid #bcbcbc; color: #999; white-space: nowrap; overflow: hidden; }

/* ribbon */
.ribbon { display: flex; height: 120px; background: linear-gradient(#fff 45%, #e9ebec); border-bottom: 1px solid #b7babd; }
.group { display: flex; flex-direction: column; flex: none; position: relative; }
.group::after { content: ""; position: absolute; right: 0; top: 1px; bottom: 3px; width: 1px; background: #d5d7da; }
.gbody { display: flex; height: 90px; padding-top: 2px; }
.glabel { display: flex; align-items: center; justify-content: center; height: 28px; color: #444; }
.g1 { width: 169px; }
.g2 { width: 113px; } .g2 .gbody { padding-left: 12px; }
.g3 { width: 276px; } .g3 .gbody { padding-left: 13px; }
.g4 { width: 297px; } .g4 .gbody { padding-left: 12px; }
.g5 { width: 148px; } .g5 .gbody { padding-left: 8px; }
.g6 { width: 314px; } .g6 .gbody { padding-left: 6px; }
.g6-label { padding-left: 4px; }
.g7 { width: 525px; } .g7 .gbody { padding-left: 2px; }
.g7-label { justify-content: flex-start; margin-left: 233px; }
.ribbon-end { flex: 1; }
.col { display: flex; flex-direction: column; flex: none; }
.it { display: flex; align-items: center; height: 29px; gap: 4px; white-space: nowrap; position: relative; }
.it .arr { margin-left: 3px; }
.it .arr.tight { margin-left: -2px; }
.it.off, .big.off { color: #b4b4b4; }
.it.on { width: 105px; margin-left: -3px; padding-left: 3px; height: 24px; margin-top: 1px; margin-bottom: 4px; background: linear-gradient(90deg, #dbe6f4 85%, #b9d2ef 85%); }
.c-g1 { margin-left: 7px; }
.w82 { width: 82px; } .w138 { width: 138px; } .w67 { width: 67px; } .w68 { width: 68px; }
.w128 { width: 128px; } .w109 { width: 109px; } .w112 { width: 112px; }
.w49 { width: 49px; } .w59 { width: 63px; } .w73 { width: 73px; }
.gap-l { margin-left: 4px; }
.draw { margin-left: 5px; }
.big { display: flex; flex-direction: column; align-items: center; flex: none; }
.big span { line-height: 18px; margin-top: 8px; white-space: nowrap; }
.big-ic { width: 36px; height: 38px; margin-top: 3px; }
.big-arr { margin: 8px 0 0; }
.select { width: 47px; height: 83px; margin-top: 3px; background: #c7d8ee; }
.sel-ic { width: 36px; height: 36px; margin-top: 2px; }
.select span { margin-top: 7px; }

/* combos */
.combos { display: flex; gap: 7px; height: 36px; padding-top: 5px; background: #c9cbcf; overflow: hidden; }
.combo { display: flex; align-items: center; justify-content: space-between; height: 28px; padding: 0 7px 0 4px; background: #fff; flex: none; }
.combo .arr { margin: 0; }
.combo.first { width: 115px; }
.combo.first span { margin-left: -10px; }
.w125 { width: 125px; } .w124 { width: 124px; }

/* workspace */
.workspace { display: flex; height: 781px; background: #eeeeee; }
.tree-panel { position: relative; width: 198px; flex: none; background: #fff; border-right: 1px solid #d0d0d0; overflow: hidden; }
.tree-head { display: flex; align-items: center; height: 35px; padding: 0 4px 2px 0; background: #f3f3f3; border-bottom: 1px solid #c4c4c4; }
.sparkle { width: 11px; height: 11px; margin-right: auto; }
.tbtn { display: flex; align-items: center; justify-content: center; width: 30px; height: 29px; margin-left: 6px; background: #eaf3fd; border: 1px solid #8cc0f5; border-radius: 4px; }
.tbtn svg { width: 24px; height: 24px; }
.tree { padding-top: 5px; }
.n { display: flex; align-items: center; height: 30px; white-space: nowrap; }
.fi { width: 16px; height: 16px; margin: 0 5.500px 0 -3px; flex: none; }
.li { width: 20px; height: 20px; margin: 0 7.500px 0 18px; flex: none; }
.n.sel { margin: 1.500px 0 1.500px 14px; width: 163px; height: 27px; background: #c5d6ee; }
.n.sel .li { margin-left: 4px; }
.tree-scroll { position: absolute; left: 182px; top: 55px; width: 10px; height: 631px; background: #cdcdcd; border-radius: 5px; }

.mid { display: flex; flex-direction: column; gap: 6px; width: 372px; margin-left: 7px; padding-top: 2px; flex: none; }
.pane { position: relative; background: #fff; border: 1px solid #d8d8d8; border-width: 0 1px 1px; overflow: hidden; }
.top-pane { height: 387px; }
.prop-pane { flex: 1; }
.pane-bar { display: flex; justify-content: flex-end; align-items: center; height: 14px; padding-right: 6px; background: #d5d7da; }
.close { font: 15px/14px "Liberation Sans", sans-serif; color: #777; }
.pane-tabs { display: flex; height: 27px; background: #efefef; border-bottom: 1px solid #d4d4d4; }
.ptab { display: flex; align-items: center; justify-content: center; width: 81px; background: #efefef; border-right: 1px solid #cfcfcf; }
.ptab.off { background: #e1e1e1; color: #8a8a8a; }
.pane-tools { display: flex; align-items: center; height: 38px; padding-left: 4px; background: #fafafa; border-bottom: 1px solid #d4d4d4; }
.pt { display: flex; align-items: center; gap: 5px; color: #555; white-space: nowrap; }
.pt .arr { margin-left: 7px; }
.t1 { margin-right: 11px; } .t2 { margin-right: 11px; } .t3 { margin-right: 16px; }
.dwg-head { display: flex; height: 32px; background: #efefef; }
.dh { display: flex; align-items: center; justify-content: center; border-right: 2px solid #e3e3e3; }
.dh.name { width: 160px; background: #7db8f8; color: #fff; border: 0; }
.lockc { width: 50px; } .num { width: 51px; }
.dwg-row { display: flex; height: 26px; }
.dr { display: flex; align-items: center; justify-content: center; }
.dr.name { width: 160px; background: #cfe6fd; border-right: 2px solid #777; border-bottom: 2px solid #777; justify-content: flex-start; padding-left: 3px; white-space: nowrap; color: #222; letter-spacing: .2px; }
.dr.lockc .ic { margin-right: 2px; }
.dr.num { background: #cfe6fd; }

.prop-head { display: flex; height: 24px; margin-top: 2px; margin-right: 18px; background: #efefef; }
.ph { display: flex; align-items: center; justify-content: center; border-right: 1px solid #d7d7d7; color: #444; }
.ph.idx { width: 28px; background: #fff; border: 0; }
.ph.pname { width: 105px; } .ph.pval { width: 125px; }
.prop-rows { width: 258px; }
.pr { display: grid; grid-template-columns: 28px 105px 125px; height: 26.270px; border-bottom: 1px solid #d2d2d2; }
.pr b { display: flex; align-items: center; justify-content: center; background: #efefef; font-weight: 400; color: #444; font-size: 15px; }
.k, .v { display: flex; align-items: center; padding-left: 4px; white-space: nowrap; border-right: 1px solid #d2d2d2; overflow: hidden; }
.v { padding-left: 3px; letter-spacing: .5px; font-size: 15px; }
.blue { color: #3b6fe0; }
.rb { font-size: 13px; line-height: 1; margin: -6px 0 0; }
.ps-up, .ps-down { position: absolute; left: 357px; border: 5px solid transparent; }
.ps-up { top: 43px; border-bottom: 6px solid #333; border-top: 0; }
.ps-down { bottom: 3px; border-top: 6px solid #333; border-bottom: 0; }
.ps-thumb { position: absolute; left: 357px; top: 55px; width: 10px; height: 141px; background: #cdcdcd; border-radius: 5px; }

.splitter { width: 5px; flex: none; background: linear-gradient(#eeeeee 330px, #5c636b 330px, #5c636b 455px, #eeeeee 455px); }
.canvas { flex: 1; min-width: 0; }
.cad { display: block; width: 1297px; height: 781px; }
.cad text { font-family: "Liberation Sans", sans-serif; letter-spacing: 0; }
.y2 { fill: none; stroke: #ffff00; stroke-width: 1.500; }
.dg { stroke: #0a7a0a; stroke-width: 1; }
.cy { stroke: #2ed2d2; stroke-width: 1.200; fill: none; }
.rd { stroke: #f00000; stroke-width: 1.200; fill: none; }
.rd2 { stroke: #f00000; stroke-width: 2; }
.sq rect { fill: #c0c0c0; stroke: #fff; stroke-width: 1; }
.yl { stroke: #f0e020; stroke-width: 1.200; fill: none; }
.bl { stroke: #1a1aff; stroke-width: 1.200; fill: none; }
.gl { stroke: #20d020; stroke-width: 1; fill: none; }
.wl { stroke: #fff; stroke-width: 1.600; fill: none; }
.dim text { font-size: 44px; fill: none; stroke: #f0f0f0; stroke-width: 1px; }
.note { font-size: 31px; fill: #fff; }
.gtx text { font-size: 42px; fill: none; stroke: #22ea22; stroke-width: 1.100px; }
.gtx2 text { font-size: 32px; fill: none; stroke: #22ea22; stroke-width: 1.100px; }
.bub ellipse { fill: #2bdf2b; stroke: #0d7f0d; stroke-width: 1; }
.bub2 { fill: #2bdf2b; stroke: #0d7f0d; }
.bub3 { fill: #666; stroke: #0d7f0d; }
.bt text { font-size: 19px; fill: #fff; text-anchor: middle; }
.ax-g { stroke: #00e000; stroke-width: 4; }
.ax-r { stroke: #f00; stroke-width: 5; }
.ax-t { font-size: 17px; text-anchor: middle; }
.yc { fill: #00d000; } .xc { fill: #f00; }
.cad .anno { font-family: "Noto Sans CJK SC", sans-serif; font-size: 25px; font-weight: 300; fill: #ff3a3a; }
.rail { fill: #4b4b4d; }
.rail-ic > * { fill: #565c66; stroke: #2e3238; }

.statusbar { display: flex; gap: 3.500px; height: 7px; padding: 5px 0 0 742px; background: #e3e3e3; }
.st { height: 2px; background: #b6b6b6; }
.st.cur { background: #64b0f8; }
.w32 { width: 32px; } .w45 { width: 45px; } .w44 { width: 44px; } .w91 { width: 91px; } .w76 { width: 76px; }

/* dropdown + annotation overlays */
.menu { position: absolute; left: 1391px; top: 94px; width: 177px; height: 90px; background: #fff; border: 1px solid #cfcfcf; box-shadow: 2px 2px 3px rgba(0,0,0,.25); z-index: 4; }
.mi { display: flex; align-items: center; gap: 9px; height: 29px; padding-left: 7px; white-space: nowrap; }
.overlay { position: absolute; left: 0; top: 0; width: 1879px; height: 976px; z-index: 5; pointer-events: none; }
.mark { fill: none; stroke: #ff2f2f; stroke-width: 3; }
.shot { fill: #ff3a3a; }
```
